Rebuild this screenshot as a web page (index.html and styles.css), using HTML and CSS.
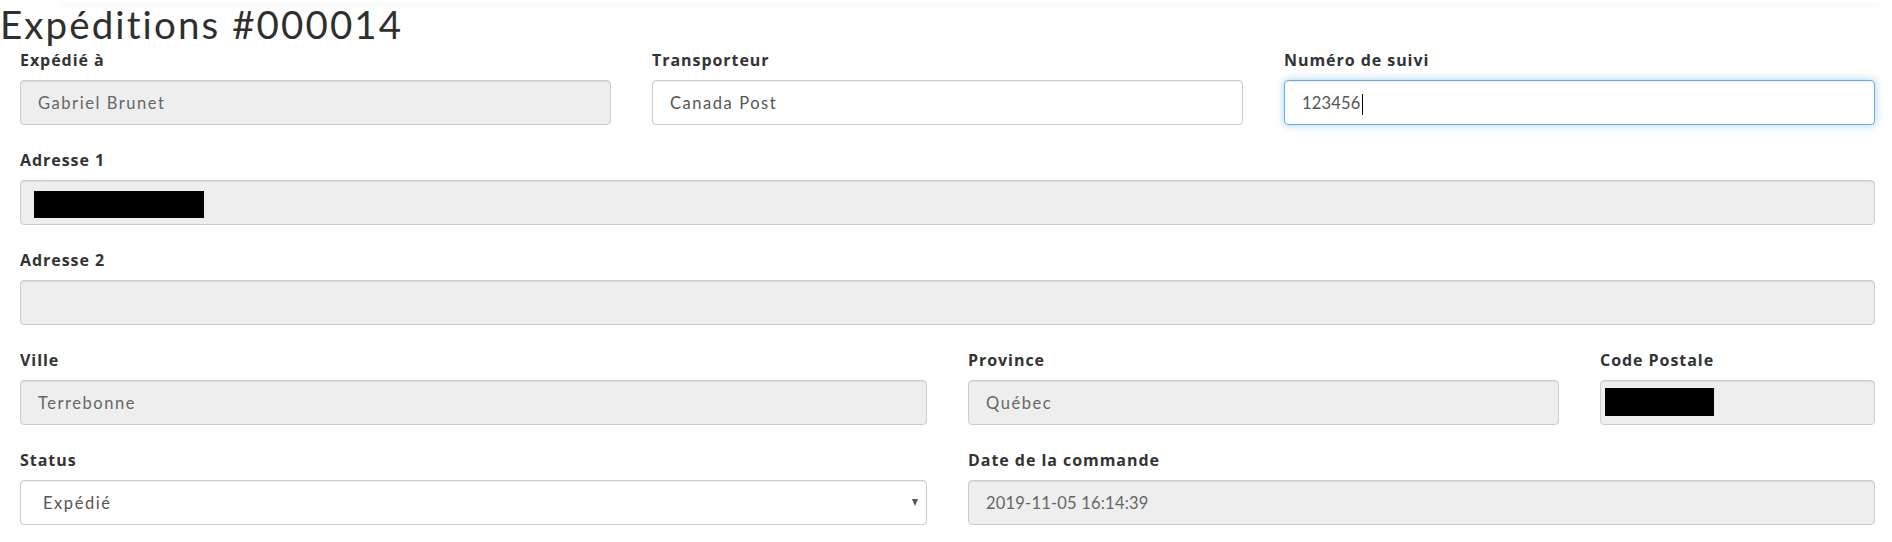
FILE: index.html
```html
<!DOCTYPE html>
<html lang="fr">
<head>
<meta charset="utf-8">
<title>Expéditions #000014</title>
<link rel="stylesheet" href="styles.css">
</head>
<body>
<div class="topbar"></div>
<h1 class="page-title">Expéditions #000014</h1>
<form class="form-grid">
  <div class="field span-4">
    <label class="field-label">Expédié à</label>
    <input class="control" type="text" value="Gabriel Brunet" disabled>
  </div>
  <div class="field span-4">
    <label class="field-label">Transporteur</label>
    <input class="control" type="text" value="Canada Post">
  </div>
  <div class="field span-4">
    <label class="field-label">Numéro de suivi</label>
    <div class="control-wrap">
      <input class="control control-num focused" type="text" value="123456">
      <span class="caret"></span>
    </div>
  </div>
  <div class="field span-12">
    <label class="field-label">Adresse 1</label>
    <div class="control-wrap">
      <input class="control" type="text" value="" disabled>
      <span class="redact redact-addr"></span>
    </div>
  </div>
  <div class="field span-12">
    <label class="field-label">Adresse 2</label>
    <input class="control" type="text" value="" disabled>
  </div>
  <div class="field span-6">
    <label class="field-label">Ville</label>
    <input class="control" type="text" value="Terrebonne" disabled>
  </div>
  <div class="field span-4">
    <label class="field-label">Province</label>
    <input class="control" type="text" value="Québec" disabled>
  </div>
  <div class="field span-2">
    <label class="field-label">Code Postale</label>
    <div class="control-wrap">
      <input class="control" type="text" value="" disabled>
      <span class="redact redact-postal"></span>
    </div>
  </div>
  <div class="field span-6">
    <label class="field-label">Status</label>
    <div class="select-wrap">
      <select class="control select">
        <option selected>Expédié</option>
        <option>En préparation</option>
        <option>Livré</option>
      </select>
    </div>
  </div>
  <div class="field span-6">
    <label class="field-label">Date de la commande</label>
    <input class="control control-num" type="text" value="2019-11-05 16:14:39" disabled>
  </div>
</form>
</body>
</html>
```
FILE: styles.css
```css
* { box-sizing: border-box; }

html, body {
  margin: 0;
  padding: 0;
  background: #ffffff;
}

body {
  font-family: Lato, "Open Sans", "Liberation Sans", sans-serif;
  color: #333333;
  overflow: hidden;
}

.topbar {
  height: 3px;
  margin: 0 12px 0 60px;
  background: #ffffff;
  box-shadow: 0 2px 7px rgba(0, 0, 0, 0.07);
}

.page-title {
  margin: 0;
  padding-left: 0;
  font-size: 38.5px;
  line-height: 42px;
  height: 42px;
  font-weight: 400;
  color: #2f2f2f;
  letter-spacing: 2.1px;
}

.form-grid {
  margin: 4px 0 0 0;
  padding: 0 17px 0 20px;
  display: grid;
  grid-template-columns: repeat(12, minmax(0, 1fr));
  column-gap: 41px;
  row-gap: 24px;
}

.span-2 { grid-column: span 2; }
.span-4 { grid-column: span 4; }
.span-6 { grid-column: span 6; }
.span-12 { grid-column: span 12; }

.field {
  display: flex;
  flex-direction: column;
}

.field-label {
  display: block;
  font-family: "Open Sans", Lato, "Liberation Sans", sans-serif;
  font-size: 16px;
  line-height: 22px;
  font-weight: 700;
  letter-spacing: 0.95px;
  color: #333333;
  margin-bottom: 9px;
}

.control {
  display: block;
  width: 100%;
  height: 45px;
  margin: 0;
  padding: 0 17px;
  font-family: Lato, "Open Sans", "Liberation Sans", sans-serif;
  font-size: 16.5px;
  letter-spacing: 1.55px;
  color: #555555;
  background: #ffffff;
  border: 1px solid #cccccc;
  border-radius: 4px;
  box-shadow: inset 0 1px 1px rgba(0, 0, 0, 0.075);
  outline: none;
}

.control-num {
  letter-spacing: 0.2px;
}

.control:disabled {
  background: #eeeeee;
  color: #666666;
  -webkit-text-fill-color: #666666;
  opacity: 1;
}

.control.focused {
  border-color: #66afe9;
  box-shadow: inset 0 1px 1px rgba(0, 0, 0, 0.075), 0 0 8px rgba(102, 175, 233, 0.6);
}

.control-wrap {
  position: relative;
}

.caret {
  position: absolute;
  left: 78px;
  top: 14px;
  width: 1px;
  height: 21px;
  background: #000000;
}

.redact {
  position: absolute;
  background: #000000;
}

.redact-addr {
  left: 14px;
  top: 11px;
  width: 170px;
  height: 27px;
}

.redact-postal {
  left: 5px;
  top: 8px;
  width: 109px;
  height: 28px;
}

.select-wrap {
  position: relative;
}

.select {
  -webkit-appearance: none;
  appearance: none;
  padding-left: 22px;
  cursor: pointer;
}

.select-wrap::after {
  content: "";
  position: absolute;
  right: 9px;
  top: 19px;
  width: 0;
  height: 0;
  border-left: 3.5px solid transparent;
  border-right: 3.5px solid transparent;
  border-top: 7px solid #555555;
  pointer-events: none;
}
```
